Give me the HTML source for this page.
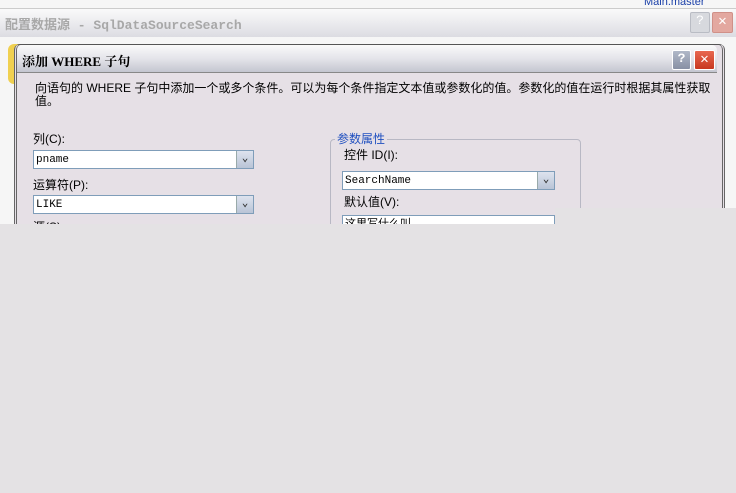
<html><head><style>
body{margin:0;width:736px;height:493px;overflow:hidden;background:#e4e2e4;font-family:"Liberation Mono","Noto Sans CJK SC",monospace;font-size:12px;position:relative}
.a{position:absolute}
.cb{position:absolute;background:#fff;border:1px solid #7f9db9;height:19px;font-size:11px;line-height:18px;padding-left:2px;box-sizing:border-box}
.cb i{position:absolute;right:0;top:0;width:16px;height:17px;background:linear-gradient(#dde3ee,#b9c4d6);border-left:1px solid #9aa;font-style:normal;text-align:center;font-size:11px;line-height:17px;color:#333;font-weight:bold}
.t{position:absolute;font-family:"Liberation Sans","Noto Sans CJK SC",sans-serif;font-size:12px;color:#000;white-space:nowrap}
</style></head><body>
<div class="a" style="left:0;top:0;width:736px;height:224px;background:#f6f6f6"></div>
<div class="a" style="left:0;top:8px;width:736px;height:28px;background:linear-gradient(#fafafa,#e8e8ec 60%,#dcdce2);border-top:1px solid #ccc"></div>
<div class="t" style="left:5px;top:14px;color:#a8a8a8;font-weight:bold;font-family:'Liberation Mono','Noto Sans CJK SC',monospace;font-size:13px">配置数据源 - SqlDataSourceSearch</div>
<div class="t" style="left:644px;top:-4px;color:#1a3fa8;font-size:11px">Main.master</div>
<div class="a" style="left:690px;top:12px;width:18px;height:19px;background:#d7d9de;border:1px solid #b9bcc4;border-radius:2px;color:#fff;text-align:center;font-size:13px">?</div>
<div class="a" style="left:712px;top:12px;width:19px;height:19px;background:#e3a8a0;border:1px solid #d09088;border-radius:2px;color:#fff;text-align:center;font-size:14px;line-height:18px">✕</div>
<div class="a" style="left:8px;top:44px;width:14px;height:40px;background:#f0d050;border-radius:6px 0 0 6px"></div>
<div class="a" style="left:14px;top:44px;width:705px;height:180px;background:#e6e0e6;border:1px solid #555;border-radius:6px 6px 0 0;border-right:3px double #666;border-left:3px double #666"></div>
<div class="a" style="left:17px;top:45px;width:700px;height:27px;background:linear-gradient(#fafafa,#e4e4ea 50%,#c4c6d0);border-radius:5px 5px 0 0;border-bottom:1px solid #888"></div>
<div class="t" style="left:22px;top:51px;font-weight:bold;font-size:13px;font-family:'Liberation Serif','Noto Serif CJK SC',serif">添加 WHERE 子句</div>
<div class="a" style="left:672px;top:50px;width:17px;height:18px;background:linear-gradient(#b0b8c8,#8890a4);border:1px solid #fff;border-radius:2px;color:#fff;text-align:center;font-weight:bold;font-size:13px">?</div>
<div class="a" style="left:694px;top:50px;width:19px;height:18px;background:linear-gradient(#e86850,#c83820);border:1px solid #fff;border-radius:2px;color:#fff;text-align:center;font-size:14px;line-height:18px">✕</div>
<div class="t" style="left:35px;top:82px;font-size:12px;line-height:13px">向语句的 WHERE 子句中添加一个或多个条件。可以为每个条件指定文本值或参数化的值。参数化的值在运行时根据其属性获取<br>值。</div>
<div class="t" style="left:33px;top:130px">列(C):</div>
<div class="cb" style="left:33px;top:150px;width:221px">pname<i>⌄</i></div>
<div class="t" style="left:33px;top:176px">运算符(P):</div>
<div class="cb" style="left:33px;top:195px;width:221px">LIKE<i>⌄</i></div>
<div class="t" style="left:33px;top:218px">源(S):</div>
<div class="a" style="left:330px;top:139px;width:249px;height:90px;border:1px solid #b8b8c4;border-radius:4px"></div>
<div class="t" style="left:335px;top:130px;color:#2050c0;background:#e6e0e6;padding:0 2px">参数属性</div>
<div class="t" style="left:344px;top:146px">控件 ID(I):</div>
<div class="cb" style="left:342px;top:171px;width:213px">SearchName<i>⌄</i></div>
<div class="t" style="left:344px;top:193px">默认值(V):</div>
<div class="cb" style="left:342px;top:215px;width:213px">这里写什么叫</div>
<div class="a" style="left:555px;top:208px;width:181px;height:285px;background:#e4e2e4"></div>
<div class="a" style="left:0;top:224px;width:736px;height:269px;background:#e4e2e4"></div>
</body></html>
